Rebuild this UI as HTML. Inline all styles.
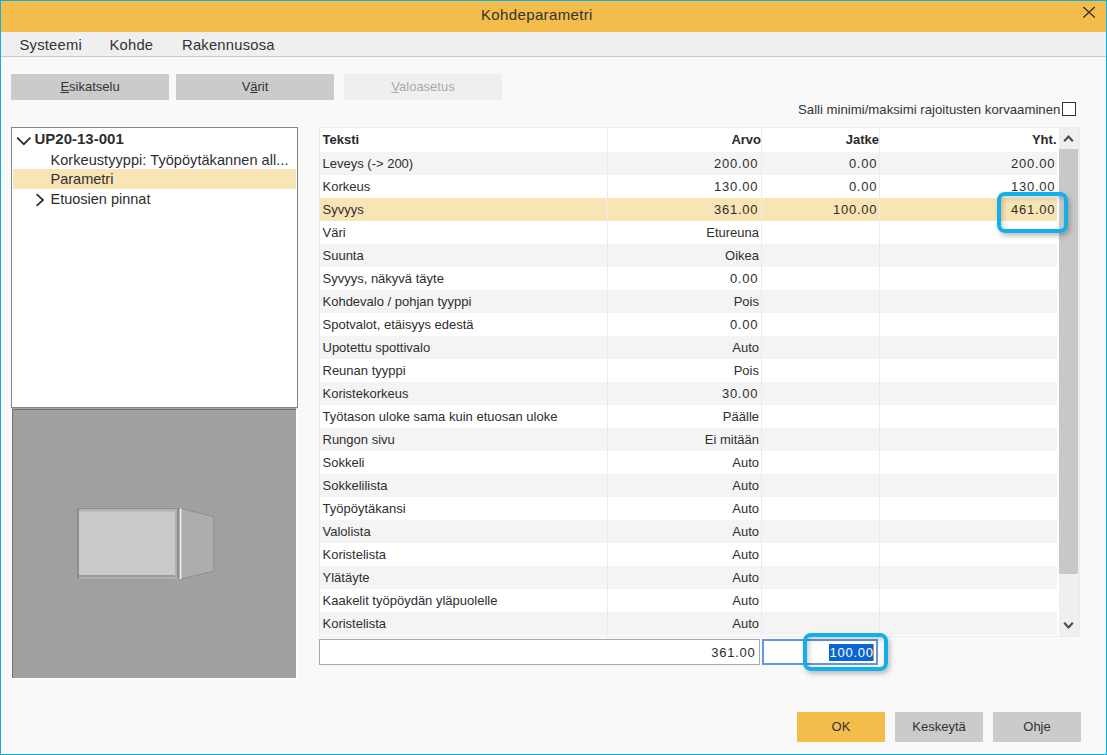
<!DOCTYPE html>
<html><head><meta charset="utf-8">
<style>
*{box-sizing:border-box;margin:0;padding:0}
html,body{width:1107px;height:755px;overflow:hidden;background:#f9f9f9;font-family:"Liberation Sans",sans-serif;color:#2e2e2e}
div,span,svg{position:absolute}
span{white-space:nowrap}
#frame{left:0;top:0;width:1107px;height:755px;border:1px solid #0caeea}
#inner{left:1px;top:1px;width:1105px;height:753px;border-left:1px solid #fff;border-bottom:1px solid #fff}
#title{left:1px;top:1px;width:1105px;height:31px;background:#f3bc4b}
#menu{left:1px;top:32px;width:1105px;height:25px;background:#efefef;border-bottom:1px solid #c9c9c9}
.mi{top:0.5px;height:24px;line-height:24px;font-size:14.8px;letter-spacing:0.2px;color:#333}
.btn{background:#cbcbcb;font-size:13px;color:#333;text-align:center}
.tb{top:74px;width:158px;height:26px;line-height:26px}
.bb{top:712px;width:88px;height:30px;line-height:30px}
#tree{left:11px;top:127px;width:287px;height:281px;background:#fff;border:1px solid #81868e}
.tr{left:0;width:285px;height:20px;line-height:20px;font-size:14.5px;color:#2e2e2e}
#prev{left:11px;top:408px;width:286px;height:271px;background:#a0a0a0;border-left:1px solid #fff;border-top:1px solid #a6a7a9;border-right:1px solid #fff;border-bottom:1px solid #fff;box-shadow:inset 1px 1px 0 #6f6f6f}
#tbl{left:319px;top:127px;width:761px;height:510px;background:#fff;border:1px solid #ebebeb}
.row{left:320px;width:737px;height:23px;line-height:23px;font-size:13px;color:#2e2e2e;background:#fff}
.row.g{background:#f4f4f4}
.row.s{background:#f9e4b5}
.c1{left:2.5px;top:0}
.c2{right:298px;top:0}
.c3{right:179px;top:0}
.c4{right:1px;top:0}
.hdr{left:320px;top:128px;width:739px;height:24px;line-height:24px;font-size:13px;font-weight:bold;color:#2a2a2a;background:#fff}
.n{letter-spacing:0.75px;margin-right:0.8px}
.vl{top:128px;width:1px;height:508px;background:#ebebeb}
</style></head><body>
<div id="frame"></div>
<div id="inner"></div>
<div id="title">
 <span style="left:480px;top:-1px;line-height:29px;font-size:15px;letter-spacing:0.36px;color:#333">Kohdeparametri</span>
 <svg style="left:1081px;top:5px" width="14" height="13" viewBox="0 0 14 13"><path d="M1.3 1L12.8 11.5M12.8 1L1.3 11.5" stroke="#2a2a2a" stroke-width="1.15" fill="none"/></svg>
</div>
<div id="menu">
 <span class="mi" style="left:18.5px">Systeemi</span>
 <span class="mi" style="left:108.5px">Kohde</span>
 <span class="mi" style="left:181px">Rakennusosa</span>
</div>

<div class="btn tb" style="left:11px"><u>E</u>sikatselu</div>
<div class="btn tb" style="left:176px">V<u>ä</u>rit</div>
<div class="btn tb" style="left:344px;background:#efefef;color:#a9a9a9"><u>V</u>aloasetus</div>
<span style="left:798px;top:100px;line-height:20px;font-size:13.2px;color:#333">Salli minimi/maksimi rajoitusten korvaaminen</span>
<div style="left:1062px;top:102px;width:14px;height:14px;border:1.3px solid #333;background:#fff"></div>

<div id="tree">
 <svg style="left:4px;top:8px" width="16" height="10" viewBox="0 0 16 10"><path d="M1.2 1.6L7.8 8.2L14.4 1.6" stroke="#2a2a2a" stroke-width="1.7" fill="none"/></svg>
 <div class="tr" style="top:1px;font-weight:bold;font-size:15px"><span style="left:22.5px;top:0">UP20-13-001</span></div>
 <div class="tr" style="top:22px"><span style="left:38.5px;top:0;letter-spacing:0.06px">Korkeustyyppi: Työpöytäkannen all...</span></div>
 <div class="tr" style="top:41px;left:1px;width:283px;background:#f9e4b5"><span style="left:37.5px;top:0">Parametri</span></div>
 <div class="tr" style="top:61px"><span style="left:38.5px;top:0">Etuosien pinnat</span></div>
 <svg style="left:23px;top:65px" width="11" height="14" viewBox="0 0 11 14"><path d="M1.6 1.2L8 7L1.6 12.8" stroke="#2a2a2a" stroke-width="1.7" fill="none"/></svg>
</div>
<div id="prev">
 <svg style="left:0;top:0" width="284" height="269" viewBox="12 409 284 269">
  <polygon points="181,508.5 214,517 214,571 181,579" fill="#adadad"/>
  <path d="M181.3 508.5L213.8 516.8L213.8 571L181.3 579" stroke="#8a8a8a" stroke-width="0.9" fill="none"/>
  <rect x="77" y="508" width="104" height="70.5" fill="#b3b3b3"/>
  <rect x="77" y="508" width="2" height="70.5" fill="#8c8c8c"/>
  <rect x="77" y="508" width="104" height="1" fill="#8e8e8e"/>
  <rect x="79" y="511.5" width="96" height="63.5" fill="#c9cac9"/>
  <rect x="79" y="575" width="98" height="2" fill="#9a9a9a"/>
  <rect x="175" y="510" width="2" height="67" fill="#b0b0b0"/>
  <rect x="177" y="509" width="2.7" height="69" fill="#8f8f8f"/>
  <rect x="179.8" y="508.5" width="1.5" height="70.5" fill="#f4f4f4"/>
 </svg>
</div>

<div id="tbl"></div>
<div class="hdr"><span class="c1">Teksti</span><span class="c2" style="right:298px">Arvo</span><span class="c3" style="right:180px">Jatke</span><span class="c4" style="right:2.5px">Yht.</span></div>
<div class="row g" style="top:152px"><span class="c1">Leveys (-&gt; 200)</span><span class="c2 n">200.00</span><span class="c3 n">0.00</span><span class="c4 n">200.00</span></div>
<div class="row" style="top:175px"><span class="c1">Korkeus</span><span class="c2 n">130.00</span><span class="c3 n">0.00</span><span class="c4 n">130.00</span></div>
<div class="row s" style="top:198px"><span class="c1">Syvyys</span><span class="c2 n">361.00</span><span class="c3 n">100.00</span><span class="c4 n">461.00</span></div>
<div class="row" style="top:221px"><span class="c1">Väri</span><span class="c2">Etureuna</span></div>
<div class="row g" style="top:244px"><span class="c1">Suunta</span><span class="c2">Oikea</span></div>
<div class="row" style="top:267px"><span class="c1">Syvyys, näkyvä täyte</span><span class="c2 n">0.00</span></div>
<div class="row g" style="top:290px"><span class="c1">Kohdevalo / pohjan tyyppi</span><span class="c2">Pois</span></div>
<div class="row" style="top:313px"><span class="c1">Spotvalot, etäisyys edestä</span><span class="c2 n">0.00</span></div>
<div class="row g" style="top:336px"><span class="c1">Upotettu spottivalo</span><span class="c2">Auto</span></div>
<div class="row" style="top:359px"><span class="c1">Reunan tyyppi</span><span class="c2">Pois</span></div>
<div class="row g" style="top:382px"><span class="c1">Koristekorkeus</span><span class="c2 n">30.00</span></div>
<div class="row" style="top:405px"><span class="c1">Työtason uloke sama kuin etuosan uloke</span><span class="c2">Päälle</span></div>
<div class="row g" style="top:428px"><span class="c1">Rungon sivu</span><span class="c2">Ei mitään</span></div>
<div class="row" style="top:451px"><span class="c1">Sokkeli</span><span class="c2">Auto</span></div>
<div class="row g" style="top:474px"><span class="c1">Sokkelilista</span><span class="c2">Auto</span></div>
<div class="row" style="top:497px"><span class="c1">Työpöytäkansi</span><span class="c2">Auto</span></div>
<div class="row g" style="top:520px"><span class="c1">Valolista</span><span class="c2">Auto</span></div>
<div class="row" style="top:543px"><span class="c1">Koristelista</span><span class="c2">Auto</span></div>
<div class="row g" style="top:566px"><span class="c1">Ylätäyte</span><span class="c2">Auto</span></div>
<div class="row" style="top:589px"><span class="c1">Kaakelit työpöydän yläpuolelle</span><span class="c2">Auto</span></div>
<div class="row g" style="top:612px"><span class="c1">Koristelista</span><span class="c2">Auto</span></div>
<div class="vl" style="left:607px"></div>
<div class="vl" style="left:761px"></div>
<div class="vl" style="left:879px"></div>
<div style="left:1059px;top:128px;width:20px;height:508px;background:#efefef;border-right:1px solid #ececec"></div>
<div style="left:1059px;top:149px;width:19px;height:425px;background:#c8c8c8"></div>
<svg style="left:1061px;top:133px" width="14" height="12" viewBox="0 0 14 12"><path d="M3.2 8.3L7.5 3.6L11.8 8.3" stroke="#4a4a4a" stroke-width="2.1" fill="none"/></svg>
<svg style="left:1061px;top:619px" width="14" height="12" viewBox="0 0 14 12"><path d="M3.2 3.7L7.5 8.4L11.8 3.7" stroke="#4a4a4a" stroke-width="2.1" fill="none"/></svg>

<div style="left:319px;top:639px;width:441px;height:26px;background:#fff;border:1px solid #a9a9a9"><span style="right:3.5px;top:1px;line-height:24px;font-size:13px;letter-spacing:0.75px">361.00</span></div>
<div style="left:762px;top:639px;width:116px;height:26px;background:#fff;border:2px solid #6296e0"></div>
<div style="left:829px;top:644px;width:44.5px;height:17px;background:#0a64d2"></div>
<span style="left:829.5px;top:639.5px;line-height:26px;font-size:13px;color:#fff;letter-spacing:0.75px">100.00</span>
<div style="left:872.5px;top:644px;width:1px;height:17px;background:#e8892a"></div>

<div style="left:997px;top:192px;width:71px;height:41px;border:4.5px solid #12afe9;border-radius:8px;box-shadow:2px 3px 5px rgba(0,0,0,0.25), inset 2px 2px 5px rgba(0,0,0,0.2)"></div>
<div style="left:803px;top:633px;width:85px;height:38px;border:4.5px solid #12afe9;border-radius:8px;box-shadow:2px 3px 5px rgba(0,0,0,0.25), inset 2px 2px 5px rgba(0,0,0,0.2)"></div>

<div class="btn bb" style="left:797px;background:#f3bc4b">OK</div>
<div class="btn bb" style="left:895px">Keskeytä</div>
<div class="btn bb" style="left:993px">Ohje</div>
</body></html>
